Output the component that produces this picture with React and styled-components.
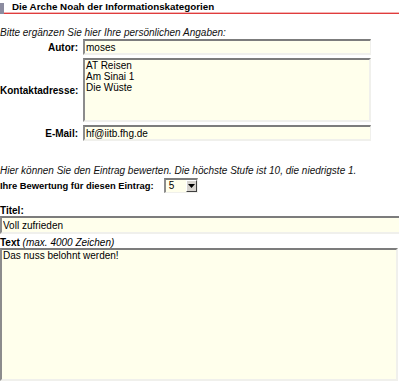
import React from 'react';
import styled, { createGlobalStyle } from 'styled-components';

const Global = createGlobalStyle`
  body {
    margin: 0;
    background: #fff;
    font-family: 'Liberation Sans', Arial, sans-serif;
    font-size: 10px;
    color: #000;
  }
`;

const Page = styled.div`
  width: 399px;
  overflow: hidden;
`;

const Header = styled.div`
  display: flex;
  align-items: center;
  height: 12px;
  border-bottom: 1px solid #e03c3c;
  box-shadow: 0 -1px 0 #f4b4b4 inset;
  padding-top: 1px;
`;

const HeaderBar = styled.div`
  width: 4px;
  height: 11px;
  margin-top: 2px;
  background: #8c8ca0;
  margin-right: 8px;
`;

const HeaderTitle = styled.h1`
  margin: 0;
  font-size: 9.8px;
  font-weight: bold;
  line-height: 12px;
`;

const Hint = styled.p`
  margin: ${(p) => p.top}px 0 0;
  font-style: italic;
  font-size: 10px;
  line-height: 12px;
  color: #111;
`;

const PersonGrid = styled.div`
  display: grid;
  grid-template-columns: 78px 288px;
  column-gap: 5px;
  row-gap: 3px;
  align-items: center;
`;

const Label = styled.label`
  text-align: right;
  font-weight: bold;
  font-size: 10px;
`;

const Field = styled.input`
  box-sizing: border-box;
  display: block;
  width: ${(p) => p.w || '100%'};
  height: ${(p) => p.h || 16}px;
  margin: 0;
  padding: 0 1px;
  background: #ffffec;
  border-style: solid;
  border-width: 2px 1px 2px 2px;
  border-color: #7c7c7c #f0f0ec #f0f0ec #8c8c8c;
  font-family: 'Liberation Sans', Arial, sans-serif;
  font-size: 10px;
  color: #000;
  outline: none;
`;

const Area = styled.textarea`
  box-sizing: border-box;
  display: block;
  width: ${(p) => p.w || '100%'};
  height: ${(p) => p.h}px;
  margin: 0;
  padding: 0 1px;
  background: #ffffec;
  border-style: solid;
  border-width: 2px;
  border-color: #7c7c7c #f0f0ec #f0f0ec #8c8c8c;
  font-family: 'Liberation Sans', Arial, sans-serif;
  font-size: 10px;
  line-height: 11px;
  color: #000;
  resize: none;
  outline: none;
`;

const RatingRow = styled.div`
  display: flex;
  align-items: center;
  gap: 10px;
  margin-top: 1px;
  font-weight: bold;
  font-size: 9.4px;
`;

const SelectBox = styled.div`
  display: flex;
  align-items: stretch;
  box-sizing: border-box;
  width: 34px;
  height: 15px;
  background: #ffffec;
  border-style: solid;
  border-width: 2px 1px 1px 2px;
  border-color: #7c7c7c #f0f0ec #f0f0ec #8c8c8c;
`;

const SelectValue = styled.span`
  flex: 1;
  padding-left: 3px;
  font-weight: normal;
  font-size: 10px;
  line-height: 11px;
`;

const SelectArrow = styled.span`
  width: 11px;
  display: flex;
  align-items: center;
  justify-content: center;
  background: #d6d3ce;
  border-style: solid;
  border-width: 1px;
  border-color: #fff #404040 #404040 #fff;
  box-sizing: border-box;
`;

const BlockLabel = styled.div`
  margin-top: ${(p) => p.top || 0}px;
  font-weight: bold;
  font-size: 10px;
  line-height: 11px;
  & em {
    font-weight: normal;
  }
`;

export default function App() {
  return (
    <Page>
      <Global />
      <Header>
        <HeaderBar />
        <HeaderTitle>Die Arche Noah der Informationskategorien</HeaderTitle>
      </Header>
      <Hint top={13}>Bitte ergänzen Sie hier Ihre persönlichen Angaben:</Hint>
      <PersonGrid>
        <Label>Autor:</Label>
        <Field defaultValue="moses" />
        <Label>Kontaktadresse:</Label>
        <Area h={64} defaultValue={'AT Reisen\nAm Sinai 1\nDie Wüste'} />
        <Label>E-Mail:</Label>
        <Field defaultValue="hf@iitb.fhg.de" />
      </PersonGrid>
      <Hint top={24}>Hier können Sie den Eintrag bewerten. Die höchste Stufe ist 10, die niedrigste 1.</Hint>
      <RatingRow>
        <span>Ihre Bewertung für diesen Eintrag:</span>
        <SelectBox>
          <SelectValue>5</SelectValue>
          <SelectArrow>
            <svg width="7" height="4" viewBox="0 0 7 4">
              <path d="M0 0h7L3.5 4z" fill="#000" />
            </svg>
          </SelectArrow>
        </SelectBox>
      </RatingRow>
      <BlockLabel top={12}>Titel:</BlockLabel>
      <Field w="400px" h={18} defaultValue="Voll zufrieden" />
      <BlockLabel top={3}>
        Text <em>(max. 4000 Zeichen)</em>
      </BlockLabel>
      <Area w="398px" h={133} defaultValue="Das nuss belohnt werden!" />
    </Page>
  );
}
